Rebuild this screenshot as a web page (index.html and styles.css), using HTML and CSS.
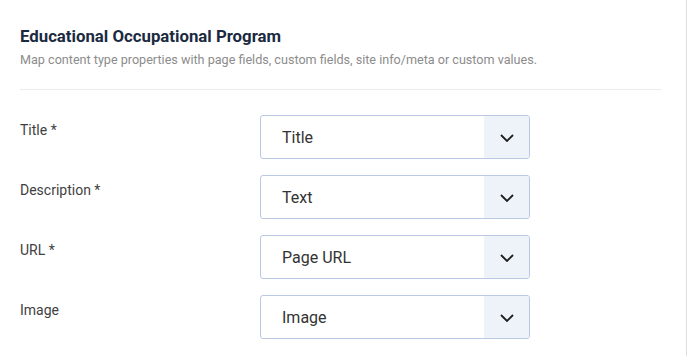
FILE: index.html
```html
<!DOCTYPE html>
<html lang="en">
<head>
    <meta charset="UTF-8">
    <meta name="viewport" content="width=device-width, initial-scale=1.0">
    <title>Schema Mapping</title>
    <link rel="stylesheet" href="styles.css">
</head>
<body>
    <div class="panel">
        <div class="panel-header">
            <h2>Educational Occupational Program</h2>
            <p>Map content type properties with page fields, custom fields, site info/meta or custom values.</p>
        </div>
        <div class="field-list">
            <div class="field-row">
                <label>Title *</label>
                <div class="select">
                    <span class="value">Title</span>
                    <span class="arrow"><svg width="14" height="8" viewBox="0 0 14 8"><path d="M1 1l6 6 6-6" fill="none" stroke="#1e1e1e" stroke-width="1.8"/></svg></span>
                </div>
            </div>
            <div class="field-row">
                <label>Description *</label>
                <div class="select">
                    <span class="value">Text</span>
                    <span class="arrow"><svg width="14" height="8" viewBox="0 0 14 8"><path d="M1 1l6 6 6-6" fill="none" stroke="#1e1e1e" stroke-width="1.8"/></svg></span>
                </div>
            </div>
            <div class="field-row">
                <label>URL *</label>
                <div class="select">
                    <span class="value">Page URL</span>
                    <span class="arrow"><svg width="14" height="8" viewBox="0 0 14 8"><path d="M1 1l6 6 6-6" fill="none" stroke="#1e1e1e" stroke-width="1.8"/></svg></span>
                </div>
            </div>
            <div class="field-row">
                <label>Image</label>
                <div class="select">
                    <span class="value">Image</span>
                    <span class="arrow"><svg width="14" height="8" viewBox="0 0 14 8"><path d="M1 1l6 6 6-6" fill="none" stroke="#1e1e1e" stroke-width="1.8"/></svg></span>
                </div>
            </div>
        </div>
    </div>
</body>
</html>
```

FILE: styles.css
```css
body {
    font-family: Roboto, "Noto Sans", sans-serif;
    margin: 0;
    padding: 0;
    background-color: #fff;
}
.panel {
    width: 687px;
    height: 356px;
    box-sizing: border-box;
    border-right: 1px solid #dedede;
    padding: 0 25px 0 20px;
    overflow: hidden;
}
.panel-header {
    padding-top: 26px;
    padding-bottom: 20px;
    border-bottom: 1px solid #ececec;
}
.panel-header h2 {
    margin: 0;
    font-size: 16.8px;
    font-weight: 700;
    color: #1b2a40;
    line-height: 20px;
}
.panel-header p {
    margin: 5px 0 0;
    font-size: 12.6px;
    color: #8c8c8c;
    line-height: 18px;
}
.field-list {
    padding-top: 25px;
}
.field-row {
    display: flex;
    align-items: flex-start;
    margin-bottom: 16px;
}
.field-row label {
    width: 240px;
    font-size: 14px;
    color: #3f3f3f;
    line-height: 18px;
    padding-top: 6px;
}
.select {
    display: flex;
    width: 270px;
    height: 44px;
    box-sizing: border-box;
    border: 1px solid #b9c9e3;
    border-radius: 3px;
    overflow: hidden;
}
.select .value {
    flex: 1;
    padding-left: 21px;
    font-size: 16px;
    color: #333;
    line-height: 43px;
}
.select .arrow {
    width: 45px;
    background-color: #eef3fa;
    display: flex;
    align-items: center;
    justify-content: center;
    padding-top: 1px;
}
```
